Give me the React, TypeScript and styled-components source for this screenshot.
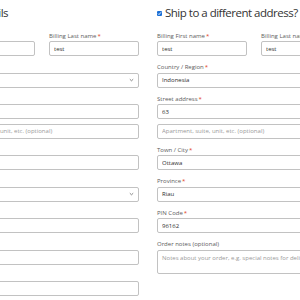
import React from 'react';
import styled, { createGlobalStyle } from 'styled-components';

const GlobalStyle = createGlobalStyle`
  html, body {
    margin: 0;
    padding: 0;
    background: #ffffff;
    overflow: hidden;
  }
  body {
    font-family: "Open Sans", "Liberation Sans", sans-serif;
  }
`;

const Page = styled.div`
  display: flex;
  gap: 18px;
  margin-left: -55px;
  padding-top: 4px;
  width: 620px;
`;

const Column = styled.div`
  width: 194px;
  flex-shrink: 0;
`;

const Heading = styled.h3`
  display: flex;
  align-items: center;
  gap: 3px;
  margin: 0 0 9.5px;
  font-size: 11.5px;
  letter-spacing: -0.5px;
  line-height: 18px;
  font-weight: 400;
  color: #333333;
  white-space: nowrap;
`;

const CheckBox = styled.span`
  display: inline-flex;
  align-items: center;
  justify-content: center;
  width: 5px;
  height: 5px;
  border-radius: 1px;
  background: #1a6fd6;
  flex-shrink: 0;
`;

const Row = styled.div`
  display: grid;
  grid-template-columns: 1fr 1fr;
  gap: 14px;
`;

const Field = styled.div<{ $tight?: boolean }>`
  margin-bottom: ${(p) => (p.$tight ? '4.5px' : '7px')};
`;

const Label = styled.label`
  display: block;
  font-size: 6px;
  line-height: 8px;
  margin-bottom: 1.5px;
  color: #5c5c5c;
  white-space: nowrap;
`;

const Required = styled.abbr`
  color: #e2401c;
  text-decoration: none;
  margin-left: 1px;
`;

const TextInput = styled.input`
  display: block;
  box-sizing: border-box;
  width: 100%;
  height: 15px;
  margin: 0;
  padding: 0 4px;
  border: 1px solid #c2c2c2;
  border-radius: 2px;
  background: #ffffff;
  font-family: inherit;
  font-size: 6px;
  color: #2e2e2e;
  outline: none;
  &::placeholder {
    color: #9a9a9a;
  }
`;

const SelectBox = styled.div`
  display: flex;
  align-items: center;
  justify-content: space-between;
  box-sizing: border-box;
  height: 15px;
  padding: 0 4px;
  border: 1px solid #c2c2c2;
  border-radius: 2px;
  font-size: 6px;
  color: #2e2e2e;
`;

const NotesArea = styled.textarea`
  display: block;
  box-sizing: border-box;
  width: 100%;
  height: 24px;
  margin: 0;
  padding: 3px 4px;
  border: 1px solid #c2c2c2;
  border-radius: 2px;
  font-family: inherit;
  font-size: 6px;
  line-height: 8px;
  color: #2e2e2e;
  resize: none;
  outline: none;
  &::placeholder {
    color: #9a9a9a;
  }
`;

const Chevron = () => (
  <svg width="5" height="4" viewBox="0 0 5 4">
    <path d="M0.8 1.2 L2.5 2.8 L4.2 1.2" fill="none" stroke="#777" strokeWidth="0.9" />
  </svg>
);

const Tick = () => (
  <svg width="5" height="5" viewBox="0 0 5 5">
    <path d="M1 2.6 L2 3.6 L4 1.3" fill="none" stroke="#fff" strokeWidth="0.9" />
  </svg>
);

type FieldProps = {
  label?: string;
  required?: boolean;
  value?: string;
  placeholder?: string;
  tight?: boolean;
};

const InputField: React.FC<FieldProps> = ({ label, required, value, placeholder, tight }) => (
  <Field $tight={tight}>
    {label && (
      <Label>
        {label}
        {required && <Required title="required">*</Required>}
      </Label>
    )}
    <TextInput readOnly defaultValue={value} placeholder={placeholder} />
  </Field>
);

const SelectField: React.FC<FieldProps> = ({ label, required, value }) => (
  <Field>
    <Label>
      {label}
      {required && <Required title="required">*</Required>}
    </Label>
    <SelectBox>
      <span>{value}</span>
      <Chevron />
    </SelectBox>
  </Field>
);

export default function App() {
  return (
    <>
      <GlobalStyle />
      <Page>
        <Column>
          <Heading>Billing details</Heading>
          <Row>
            <InputField label="Billing First name" required value="test" />
            <InputField label="Billing Last name" required value="test" />
          </Row>
          <SelectField label="Country / Region" required value="" />
          <InputField label="Street address" required tight value="" />
          <InputField placeholder="Apartment, suite, unit, etc. (optional)" />
          <InputField label="Town / City" required value="" />
          <SelectField label="Province" required value="" />
          <InputField label="PIN Code" required value="" />
          <InputField label="Phone" required value="" />
          <InputField label="Email address" required value="" />
        </Column>
        <Column>
          <Heading>
            <CheckBox>
              <Tick />
            </CheckBox>
            Ship to a different address?
          </Heading>
          <Row>
            <InputField label="Billing First name" required value="test" />
            <InputField label="Billing Last name" required value="test" />
          </Row>
          <SelectField label="Country / Region" required value="Indonesia" />
          <InputField label="Street address" required tight value="63" />
          <InputField placeholder="Apartment, suite, unit, etc. (optional)" />
          <InputField label="Town / City" required value="Ottawa" />
          <SelectField label="Province" required value="Riau" />
          <InputField label="PIN Code" required value="96162" />
          <Field>
            <Label>Order notes (optional)</Label>
            <NotesArea
              readOnly
              placeholder="Notes about your order, e.g. special notes for delivery."
            />
          </Field>
        </Column>
      </Page>
    </>
  );
}
